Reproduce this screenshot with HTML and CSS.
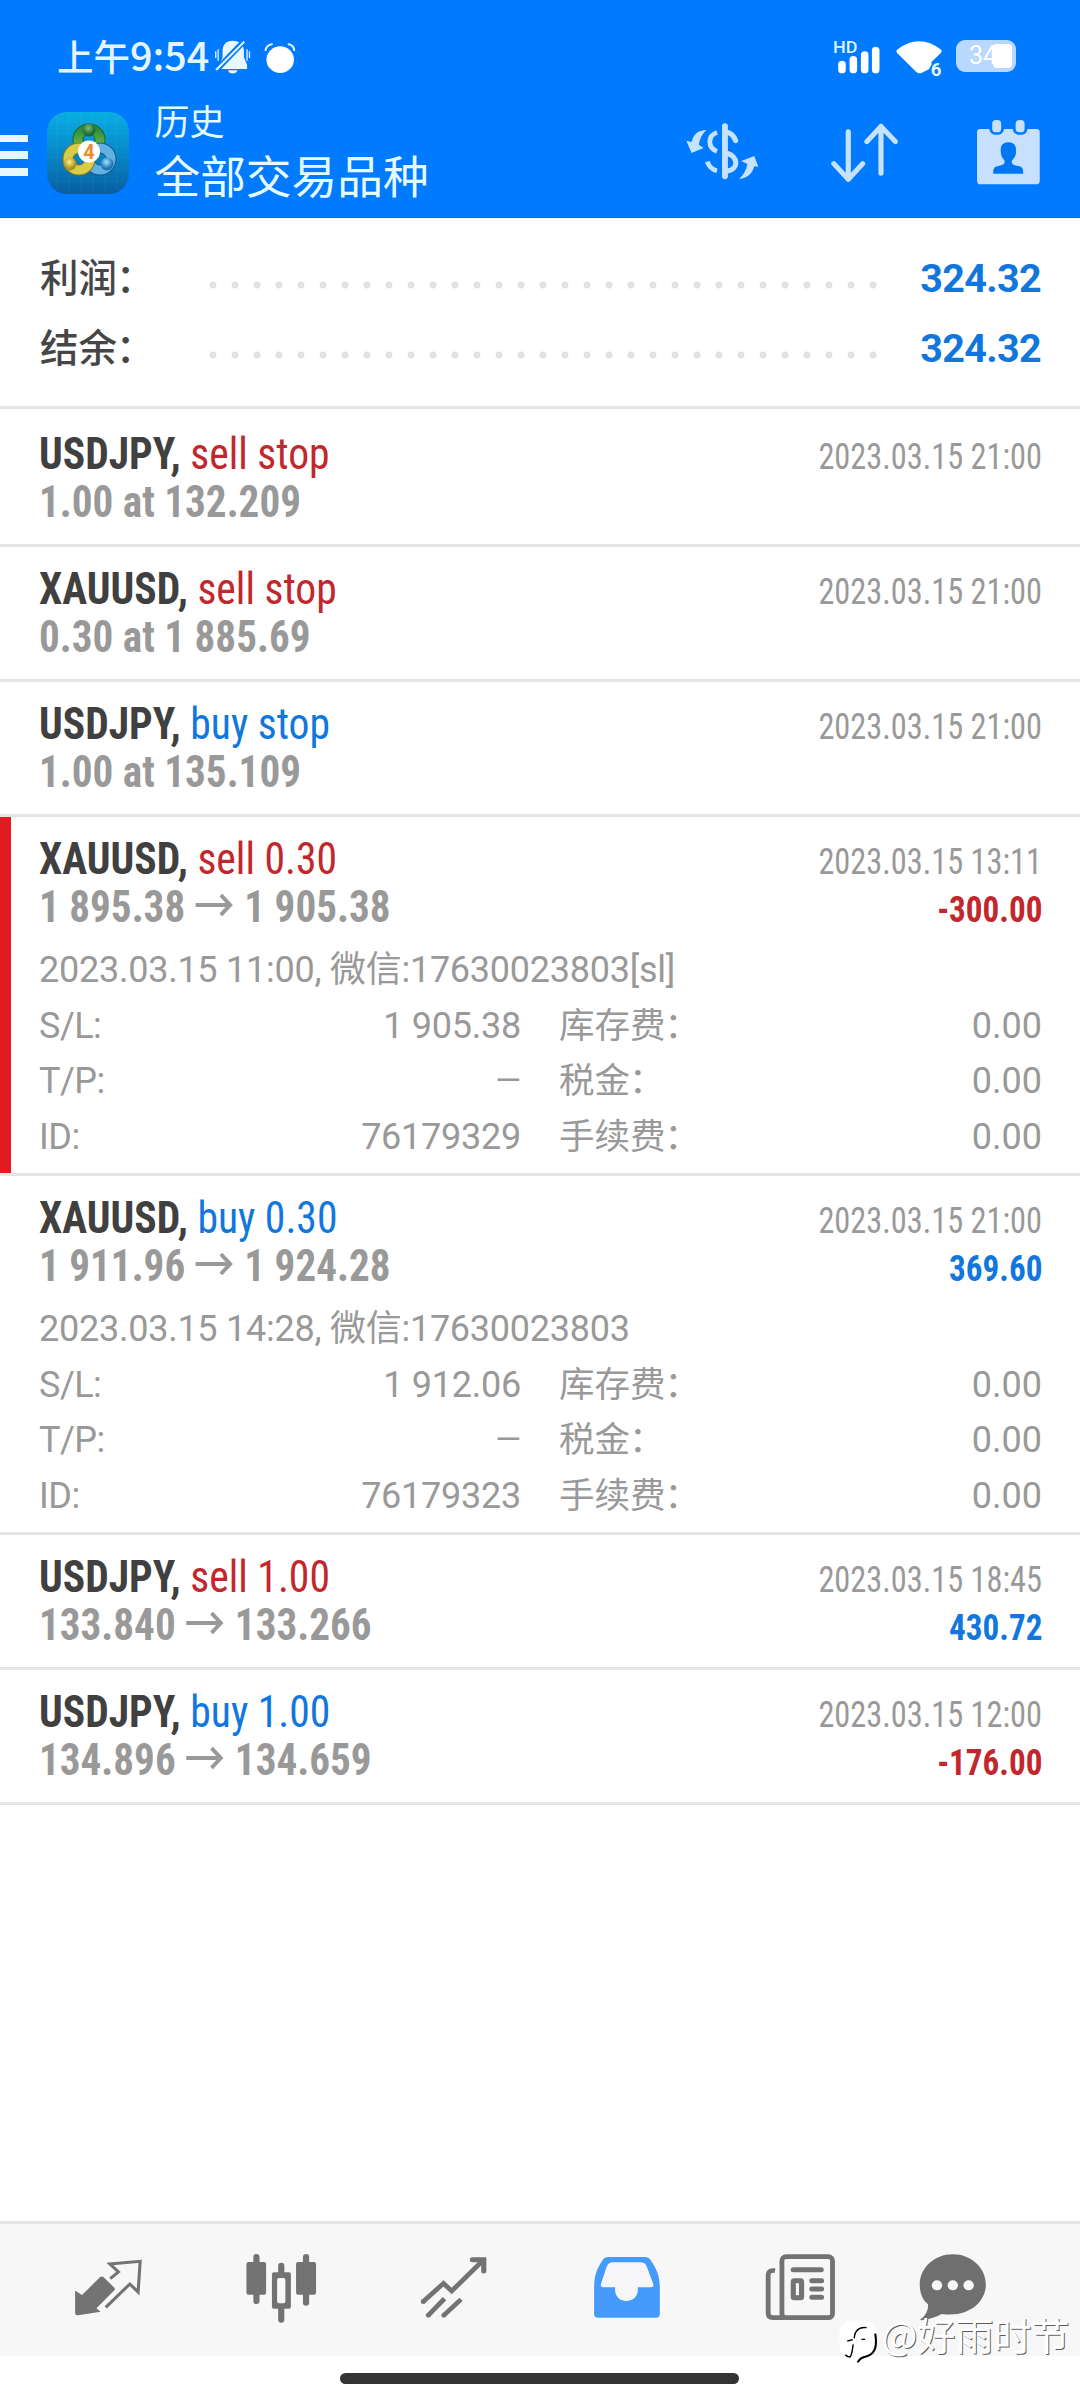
FILE: index.html
```html
<!DOCTYPE html>
<html lang="zh-CN">
<head>
<meta charset="utf-8">
<title>历史</title>
<link rel="stylesheet" href="styles.css">
</head>
<body>
<div class="screen">
  <header class="header">
    <div class="status">
      <span class="clock">上午<span class="clock-num">9:54</span></span>
      <svg class="st-bell" viewBox="625 110 108 125" preserveAspectRatio="none" fill="#e9f7ff">
        <path d="M679 121c-19 0-29 12-29 30v20l-9 22v13h80v-13l-9-22v-20c0-18-14-30-33-30z"/>
        <path d="M666 210h27c-2 13-25 13-27 0z"/>
        <path d="M630 153v20M637 147v34M721 147v34M728 153v20" stroke="#d5edff" stroke-width="4"/>
        <path d="M628 213l86-92" stroke="#007aff" stroke-width="17"/>
        <path d="M631 209l82-85" stroke="#e9f7ff" stroke-width="6"/>
      </svg>
      <svg class="st-alarm" viewBox="768 110 98 125" preserveAspectRatio="none">
        <circle cx="818" cy="178" r="40" fill="#fff"/>
        <path d="M775 152c1-12 9-19 21-21M840 131c12 2 19 9 19 21" fill="none" stroke="#d9efff" stroke-width="6"/>
      </svg>
      <svg class="st-signal" viewBox="845 110 145 125" preserveAspectRatio="none">
        <text class="hd" x="848" y="159" textLength="71" lengthAdjust="spacingAndGlyphs">HD</text>
        <path d="M874 192v16M907 178v30M940 164v44M972 150v58" stroke="#fff" stroke-width="22" stroke-linecap="round"/>
      </svg>
      <svg class="st-wifi" viewBox="1025 110 145 125" preserveAspectRatio="none">
        <path d="M1034 148q64-50 128 0q3 6-1 10l-27 27v18l-28 14q-9 5-17-3l-55-56q-4-5 0-10z" fill="#fff"/>
        <circle cx="1148" cy="210" r="21" fill="#007aff"/>
        <text class="wifi-gen" x="1132" y="227">6</text>
      </svg>
      <span class="battery"><span class="battery-num">34</span><i class="battery-level"></i></span>
    </div>
    <div class="toolbar">
      <div class="menu"><i></i><i></i><i></i></div>
      <svg class="app-icon" viewBox="0 0 82 82">
        <defs>
          <linearGradient id="bg" x1="0" y1="0" x2="0" y2="1"><stop offset="0" stop-color="#08aee4"/><stop offset=".5" stop-color="#0788c8"/><stop offset="1" stop-color="#075e9f"/></linearGradient>
          <linearGradient id="gr" x1="0" y1="0" x2="0" y2="1"><stop offset="0" stop-color="#2d8a3c"/><stop offset="1" stop-color="#7cc84a"/></linearGradient>
          <radialGradient id="gb" cx=".45" cy=".35"><stop offset="0" stop-color="#7cc07c"/><stop offset="1" stop-color="#1c6b33"/></radialGradient>
          <radialGradient id="yb" cx=".45" cy=".35"><stop offset="0" stop-color="#fff08a"/><stop offset="1" stop-color="#ab9118"/></radialGradient>
          <radialGradient id="bb" cx=".45" cy=".35"><stop offset="0" stop-color="#a6e0ff"/><stop offset="1" stop-color="#1d74b5"/></radialGradient>
        </defs>
        <rect width="82" height="82" rx="20" fill="url(#bg)"/>
        <path d="M10 4v74M22 0v82M34 0v82M46 0v82M58 0v82M70 4v74M4 10h74M0 22h82M0 34h82M0 46h82M0 58h82M4 70h74" stroke="#fff" stroke-opacity=".05"/>
        <circle cx="42" cy="28" r="11" fill="none" stroke="#20642c" stroke-width="11"/>
        <circle cx="42" cy="28" r="11" fill="none" stroke="url(#gr)" stroke-width="9"/>
        <circle cx="53" cy="47" r="11" fill="none" stroke="#14558a" stroke-width="11"/>
        <circle cx="53" cy="47" r="11" fill="none" stroke="#5fb2e2" stroke-width="9"/>
        <circle cx="32" cy="47" r="11" fill="none" stroke="#887718" stroke-width="11"/>
        <circle cx="32" cy="47" r="11" fill="none" stroke="#d8cc4a" stroke-width="9"/>
        <circle cx="42" cy="18" r="6.500" fill="url(#gb)"/>
        <circle cx="23" cy="52" r="6.500" fill="url(#yb)"/>
        <circle cx="60" cy="52" r="6.500" fill="url(#bb)"/>
        <circle cx="42" cy="39.500" r="11" fill="#fff"/>
        <text class="four" x="36.300" y="46.700">4</text>
      </svg>
      <div class="titles"><div class="title-small">历史</div><div class="title-big">全部交易品种</div></div>
      <svg class="tb-dollar" viewBox="420 354 220 204" preserveAspectRatio="none" fill="#c6e2ff">
        <path d="M482 390c-24 1-37 12-43 36l-15-4 15 37 35-15-14-10c3-18 10-33 22-44z"/>
        <path d="M577 537c24-1 39-17 44-38l12 1-12-32-38 15 18 9c-3 18-11 33-24 45z"/>
        <path d="M513 397c-28 10-28 47 0 57M485 485c4 14 14 24 28 27" fill="none" stroke="#c6e2ff" stroke-width="14"/>
        <path d="M536 378v151" stroke="#c6e2ff" stroke-width="17" stroke-linecap="round"/>
        <path d="M540 396c15 3 22 12 27 26M540 459c36 10 36 48 4 54" fill="none" stroke="#c6e2ff" stroke-width="15" stroke-linecap="round"/>
      </svg>
      <svg class="tb-sort" viewBox="840 354 208 204" preserveAspectRatio="none" fill="none" stroke="#c6e2ff" stroke-width="15" stroke-linecap="round" stroke-linejoin="round">
        <path d="M896 395v143M854 491l42 47 42-47M991 520V379M950 425l41-46 42 46"/>
      </svg>
      <svg class="tb-cal" viewBox="1262 354 194 204" preserveAspectRatio="none">
        <path d="M1278 387h162q10 0 10 10v145q0 11-10 11h-162q-10 0-10-11v-145q0-10 10-10z" fill="#c8e0ff"/>
        <rect x="1304" y="352" width="42" height="52" rx="16" fill="#007aff"/><rect x="1372" y="352" width="42" height="52" rx="16" fill="#007aff"/>
        <rect x="1312" y="360" width="26" height="37" rx="11" fill="#c8e0ff"/><rect x="1380" y="360" width="26" height="37" rx="11" fill="#c8e0ff"/>
        <path d="M1359 427c-17 0-24 11-22 29 0 14 7 20 11 26 2 13-8 13-22 17-10 3-11 9-11 22h87c0-13-1-19-11-22-14-4-24-4-22-17 5-6 12-12 12-26 2-18-5-29-22-29z" fill="#0077f2"/>
      </svg>
    </div>
  </header>

  <section class="summary">
    <div class="sum-row"><span class="sum-label">利润<span class="colon">：</span></span><span class="dots"></span><span class="sum-value">324.32</span></div>
    <div class="sum-row"><span class="sum-label">结余<span class="colon">：</span></span><span class="dots"></span><span class="sum-value">324.32</span></div>
  </section>

  <main class="deals">
    <article class="deal first">
      <div class="line"><span class="name"><b>USDJPY,</b> <span class="sell">sell stop</span></span><time>2023.03.15 21:00</time></div>
      <div class="line"><span class="price">1.00 at 132.209</span></div>
    </article>
    <article class="deal">
      <div class="line"><span class="name"><b>XAUUSD,</b> <span class="sell">sell stop</span></span><time>2023.03.15 21:00</time></div>
      <div class="line"><span class="price">0.30 at 1 885.69</span></div>
    </article>
    <article class="deal">
      <div class="line"><span class="name"><b>USDJPY,</b> <span class="buy">buy stop</span></span><time>2023.03.15 21:00</time></div>
      <div class="line"><span class="price">1.00 at 135.109</span></div>
    </article>
    <article class="deal open marked">
      <div class="line"><span class="name"><b>XAUUSD,</b> <span class="sell">sell 0.30</span></span><time>2023.03.15 13:11</time></div>
      <div class="line"><span class="price">1 895.38 <svg class="arrow" viewBox="0 0 40 22"><path d="M0 11h37M27 1l10 10-10 10"/></svg> 1 905.38</span><span class="result sell">-300.00</span></div>
      <div class="note">2023.03.15 11:00, 微信:17630023803[sl]</div>
      <dl class="details">
        <dt>S/L:</dt><dd>1 905.38</dd><dt>库存费<span class="colon">：</span></dt><dd>0.00</dd>
        <dt>T/P:</dt><dd class="none">—</dd><dt>税金<span class="colon">：</span></dt><dd>0.00</dd>
        <dt>ID:</dt><dd>76179329</dd><dt>手续费<span class="colon">：</span></dt><dd>0.00</dd>
      </dl>
    </article>
    <article class="deal open">
      <div class="line"><span class="name"><b>XAUUSD,</b> <span class="buy">buy 0.30</span></span><time>2023.03.15 21:00</time></div>
      <div class="line"><span class="price">1 911.96 <svg class="arrow" viewBox="0 0 40 22"><path d="M0 11h37M27 1l10 10-10 10"/></svg> 1 924.28</span><span class="result buy">369.60</span></div>
      <div class="note">2023.03.15 14:28, 微信:17630023803</div>
      <dl class="details">
        <dt>S/L:</dt><dd>1 912.06</dd><dt>库存费<span class="colon">：</span></dt><dd>0.00</dd>
        <dt>T/P:</dt><dd class="none">—</dd><dt>税金<span class="colon">：</span></dt><dd>0.00</dd>
        <dt>ID:</dt><dd>76179323</dd><dt>手续费<span class="colon">：</span></dt><dd>0.00</dd>
      </dl>
    </article>
    <article class="deal">
      <div class="line"><span class="name"><b>USDJPY,</b> <span class="sell">sell 1.00</span></span><time>2023.03.15 18:45</time></div>
      <div class="line"><span class="price">133.840 <svg class="arrow" viewBox="0 0 40 22"><path d="M0 11h37M27 1l10 10-10 10"/></svg> 133.266</span><span class="result buy">430.72</span></div>
    </article>
    <article class="deal">
      <div class="line"><span class="name"><b>USDJPY,</b> <span class="buy">buy 1.00</span></span><time>2023.03.15 12:00</time></div>
      <div class="line"><span class="price">134.896 <svg class="arrow" viewBox="0 0 40 22"><path d="M0 11h37M27 1l10 10-10 10"/></svg> 134.659</span><span class="result sell">-176.00</span></div>
    </article>
  </main>

  <nav class="nav">
    <svg class="n1" viewBox="210 155 210 215" preserveAspectRatio="none" fill="#737373">
      <path d="M221 272l18 12 52-53q6-5 11 0l31 31q3 4 0 8l-52 54 12 10-65 11q-9 0-9-7v-66z"/>
      <path d="M321 235l24-20-25-24 88-8-6 92-24-24-70 70" fill="none" stroke="#737373" stroke-width="9"/>
    </svg>
    <svg class="n2" viewBox="705 155 220 215" preserveAspectRatio="none" fill="#737373">
      <rect x="715" y="185" width="57" height="98" rx="6"/><rect x="859" y="185" width="58" height="98" rx="6"/>
      <path d="M744 170v132M888 170v137M816 196v24M816 320v38" stroke="#737373" stroke-width="18" stroke-linecap="round"/>
      <path d="M795 216h43q6 0 6 6v97q0 6-6 6h-43q-6 0-6-6v-97q0-6 6-6zM804 240v63q0 6 5 6h14q5 0 5-6v-63q0-7-5-7h-14q-5 0-5 7z" fill-rule="evenodd"/>
    </svg>
    <svg class="n3" viewBox="1215 155 210 215" preserveAspectRatio="none" fill="none" stroke="#737373" stroke-width="14">
      <path d="M1229 305l60-56 24 23 90-91" /><path d="M1373 178h33v34" stroke-width="15" stroke-linecap="round"/>
      <path d="M1244 346l48-51M1289 346l51-49"/><g fill="#737373" stroke="none"><circle cx="1230" cy="304" r="7"/><circle cx="1245" cy="345" r="7"/><circle cx="1290" cy="345" r="7"/></g>
    </svg>
    <svg class="n4" viewBox="150 155 208 215" preserveAspectRatio="none">
      <path d="M200 170h106q12 0 17 9c16 24 27 45 27 84v77q0 12-11 12h-169q-11 0-11-12v-77c0-39 9-60 25-84q5-9 16-9z" fill="#449bfb"/>
      <path d="M213 186h80q13 0 18 10l20 55q3 10-7 10h-38v7c0 45-66 45-66 0v-7h-34q-10 0-7-10l16-50q5-15 18-15z" fill="#f6f6f8"/>
    </svg>
    <svg class="n5" viewBox="650 155 215 215" preserveAspectRatio="none" fill="none" stroke="#737373" stroke-width="14">
      <rect x="705" y="169" width="147" height="183" rx="12"/><path d="M685 211q-20-3-20 14v113q0 14 13 14h34"/>
      <path d="M738 208h81M792 241h28M792 266h28M792 291h28" stroke-width="15" stroke-linecap="round"/><rect x="738" y="241" width="24" height="51" rx="3" stroke-width="15"/>
    </svg>
    <svg class="n6" viewBox="1095 155 208 215" preserveAspectRatio="none">
      <path d="M1199 162c54 0 96 41 96 91s-47 99-128 88c-17 9-39 17-59 19q-6 0-2-4c15-12 22-27 21-44-16-14-24-34-24-59 0-50 42-91 96-91z" fill="#6f6f6f"/>
      <g fill="#f7f7f7"><circle cx="1153" cy="255" r="15"/><circle cx="1199" cy="255" r="15"/><circle cx="1245" cy="255" r="15"/></g>
    </svg>
  </nav>
  <footer class="gesture"><i></i></footer>

  <div class="watermark">
    <svg viewBox="864 355 116 140" preserveAspectRatio="none">
      <path d="M905 363h36c22 0 33 14 33 38v36c0 22-12 36-31 40l-22 14v-14c-40 1-53-16-53-40v-36c0-24 13-38 37-38z" fill="#fff"/>
      <path d="M947 384c-20-3-34 6-36 32M891 424l16-4M908 434c-2 18-4 32-9 38-4 0-10-3-14-7M932 419h11" fill="none" stroke="#000" stroke-width="4"/>
      <path d="M972 402c7 44-3 62-29 69-10 2-17 7-22 17" fill="none" stroke="#000" stroke-width="6"/>
    </svg>
    <span>@好雨时节</span>
  </div>
</div>
</body>
</html>
```
FILE: styles.css
```css
* { box-sizing: border-box; }
body { margin: 0; background: #fff; font-family: Roboto, "Noto Sans CJK SC", sans-serif; }
svg { display: block; flex: none; }
.screen { position: relative; width: 1080px; height: 2400px; display: flex; flex-direction: column; overflow: hidden; background: #fff; }

.header { height: 218px; background: #007aff; border-bottom: 1px solid #1767b5; }
.status { display: flex; height: 92px; padding: 36.7px 63px 0 57px; color: #e4f5ff; }
.clock { width: 157.2px; margin-top: -4px; font-family: "Noto Sans CJK SC", sans-serif; font-size: 36.500px; font-weight: 500; line-height: 42px; white-space: nowrap; }
.clock-num { font-size: 39.500px; }
.status svg { height: 41.700px; }
.st-bell { width: 37.200px; }
.st-alarm { width: 33.700px; margin-left: 12px; }
.st-signal { width: 49.900px; margin-left: auto; }
.st-wifi { width: 49.900px; margin-left: 12px; }
.hd { font: 500 48px Roboto, sans-serif; fill: #d9f3ff; }
.wifi-gen { font: 700 54px Roboto, sans-serif; fill: #eaf8ff; }
.battery { display: flex; align-items: center; width: 60px; height: 32px; margin: 3.500px 1px 0 12px; padding-left: 13px; border-radius: 9px; background: #b9d8ff; }
.battery-num { width: 24px; font-size: 25px; line-height: 32px; color: #fff; }
.battery-level { width: 19px; height: 24px; border-radius: 4px; background: #fff; }

.toolbar { display: flex; height: 125px; padding-right: 38.600px; }
.menu { width: 28px; padding-top: 42.500px; display: flex; flex-direction: column; gap: 9px; }
.menu i { height: 7.700px; background: #e6f8ff; }
.app-icon { width: 82px; height: 82px; margin: 20px 0 0 18.500px; }
.four { font: 700 20px Roboto, sans-serif; fill: #ef8a2c; }
.titles { width: 440px; margin-left: 26px; color: #e6fbff; font-family: "Noto Sans CJK SC", sans-serif; white-space: nowrap; }
.title-small { margin-top: 8px; font-size: 35px; line-height: 40px; }
.title-big { margin-top: 8px; font-size: 45.700px; line-height: 52px; }
.toolbar > svg:not(.app-icon) { height: 68px; margin-top: 26px; }
.tb-dollar { width: 75.800px; margin-left: auto; }
.tb-sort { width: 71.600px; margin-left: 69px; }
.tb-cal { width: 66.800px; margin-left: 73.700px; }

.summary { height: 191px; padding: 25px 39px 0 40px; border-bottom: 3px solid #e5e5e5; }
.sum-row { display: flex; align-items: center; height: 70px; }
.sum-label { width: 161.500px; margin-top: -6px; font-family: "Noto Sans CJK SC", sans-serif; font-size: 38.500px; font-weight: 500; color: #464646; }
.colon { margin-left: -1px; }
.dots { width: 682px; height: 8px; margin-top: 13px; background: radial-gradient(circle at 11px 4px, #e2e2e2 3px, transparent 4px) 0 0 / 22px 8px; }
.sum-value { margin-left: auto; font-size: 39.500px; font-weight: 700; letter-spacing: -.650px; color: #1177dc; }

.deal { height: 135px; padding: 17.500px 38px 0 39px; border-bottom: 3px solid #e5e5e5; }
.first { height: 138px; padding-top: 20.500px; }
.open { height: 359px; }
.marked { box-shadow: inset 11px 0 #e11b1f; }
.line { display: flex; align-items: baseline; justify-content: space-between; height: 48px; line-height: 48px; white-space: pre; font-family: "Roboto Condensed", Roboto, sans-serif; font-stretch: 75%; }
.name, .price { font-size: 44px; transform-origin: left; }
.name { transform: scaleX(.945); }
.name b { color: #404040; }
.price { transform: scaleX(.935); color: #999; font-weight: 700; }
.arrow { display: inline-block; width: 43px; height: 22px; vertical-align: 6px; fill: none; stroke: #999; stroke-width: 4; }
.sell { color: #c1272d; }
.buy { color: #1177dc; }
time { font-size: 36px; transform: scaleX(.898); transform-origin: right; color: #999; }
.result { font-size: 36px; font-weight: 700; transform: scaleX(.92); transform-origin: right; }
.note, .details { font-size: 36px; color: #999; white-space: nowrap; }
.note { height: 56px; margin-top: 14px; line-height: 50px; letter-spacing: -.250px; }
.details { display: grid; grid-template-columns: 100px 382px 198px 1fr; grid-auto-rows: 55.500px; margin: 0; line-height: 50px; }
dt, dd { margin: 0; }
dd { text-align: right; }
dd:nth-child(4n+2) { letter-spacing: -.250px; }
dt:nth-child(4n+1) { letter-spacing: -.500px; }
dt:nth-child(4n+3) { padding-left: 38px; font-size: 35.500px; }
.details .none { font-size: 33px; letter-spacing: 0; }

.nav { display: flex; align-items: flex-start; height: 135px; margin-top: auto; padding: 27.700px 0 0 72.300px; border-top: 3px solid #e4e4e4; background: #f7f7f7; }
.nav svg { height: 71.700px; }
.n1 { width: 72.300px; }
.n2 { width: 75.800px; margin-left: 98.200px; }
.n3 { width: 72.300px; margin-left: 99.900px; }
.n4 { width: 71.600px; margin-left: 100.500px; }
.n5 { width: 74px; margin-left: 100.500px; }
.n6 { width: 71.600px; margin-left: 79.500px; }
.gesture { display: flex; justify-content: center; height: 44px; padding: 17px 1px 0 0; }
.gesture i { width: 399px; height: 11px; border-radius: 6px; background: #333; }

.watermark { position: absolute; left: 837.500px; top: 2318px; display: flex; align-items: flex-start; }
.watermark svg { width: 40px; height: 46.700px; }
.watermark span { margin: -4px 0 0 4px; font-family: "Noto Sans CJK SC", sans-serif; font-size: 38px; line-height: 40px; color: #fff; text-shadow: 1px 1px 0 rgba(0, 0, 0, .65); white-space: nowrap; }
```
